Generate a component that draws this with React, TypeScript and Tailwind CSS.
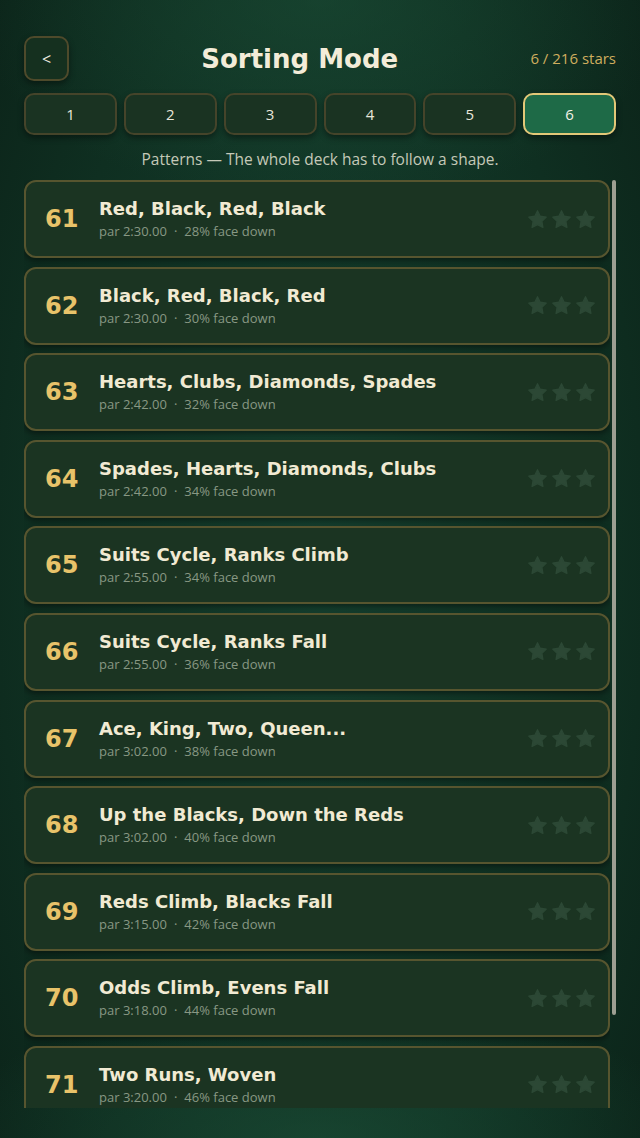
const levels = [
	{ n: 61, name: "Red, Black, Red, Black", par: "2:30.00", down: 28 },
	{ n: 62, name: "Black, Red, Black, Red", par: "2:30.00", down: 30 },
	{ n: 63, name: "Hearts, Clubs, Diamonds, Spades", par: "2:42.00", down: 32 },
	{ n: 64, name: "Spades, Hearts, Diamonds, Clubs", par: "2:42.00", down: 34 },
	{ n: 65, name: "Suits Cycle, Ranks Climb", par: "2:55.00", down: 34 },
	{ n: 66, name: "Suits Cycle, Ranks Fall", par: "2:55.00", down: 36 },
	{ n: 67, name: "Ace, King, Two, Queen...", par: "3:02.00", down: 38 },
	{ n: 68, name: "Up the Blacks, Down the Reds", par: "3:02.00", down: 40 },
	{ n: 69, name: "Reds Climb, Blacks Fall", par: "3:15.00", down: 42 },
	{ n: 70, name: "Odds Climb, Evens Fall", par: "3:18.00", down: 44 },
	{ n: 71, name: "Two Runs, Woven", par: "3:20.00", down: 46 },
];

const Star = () => (
	<svg viewBox="0 0 24 24" className="w-[21px] h-[21px]">
		<polygon
			points="12,2 15.09,8.26 22,9.27 17,14.14 18.18,21.02 12,17.77 5.82,21.02 7,14.14 2,9.27 8.91,8.26"
			fill="#2c4835"
			stroke="#2c4835"
			strokeWidth="1.5"
			strokeLinejoin="round"
		/>
	</svg>
);

const LevelCard = ({ n, name, par, down }: { n: number; name: string; par: string; down: number }) => {
	return (
		<div className="flex items-center shrink-0 h-[78px] rounded-[12px] border-2 border-[#57552f] bg-[#1b3422] pl-[19px] pr-[12px] shadow-[0_3px_6px_rgba(0,0,0,0.45)]">
			<div className="w-[54px] text-[24px] font-bold text-[#e8c36a] font-['DejaVu_Sans',sans-serif] leading-none">{n}</div>
			<div className="flex flex-col flex-1">
				<div className="text-[18px] leading-[22px] font-bold text-[#f1ead3] font-['DejaVu_Sans',sans-serif]">{name}</div>
				<div className="mt-[2px] text-[13px] leading-[18px] text-[#889884] font-['Open_Sans',sans-serif]">
					par {par}
					<span className="mx-[7px]">·</span>
					{down}% face down
				</div>
			</div>
			<div className="flex gap-[3px]">
				<Star />
				<Star />
				<Star />
			</div>
		</div>
	);
};

export default function App() {
	const tabs = [1, 2, 3, 4, 5, 6];
	const active = 6;

	return (
		<div className="w-full h-[1138px] flex flex-col px-6 pt-[36px] pb-[30px] bg-[radial-gradient(ellipse_55%_18%_at_50%_0%,rgba(28,80,56,0.55),transparent),radial-gradient(ellipse_60%_12%_at_50%_100%,rgba(28,80,56,0.6),transparent),radial-gradient(ellipse_75%_90%_at_50%_50%,#164230_0%,#0f2f21_60%,#0a1f16_100%)] font-['Open_Sans',sans-serif]">
			{/* header */}
			<div className="flex items-center h-[45px]">
				<button className="w-[45px] h-[45px] shrink-0 rounded-[10px] border-2 border-[#4e4a2b] bg-[#15301f] text-[#f0ede0] text-[16px] shadow-[0_3px_6px_rgba(0,0,0,0.4)]">
					&lt;
				</button>
				<h1 className="flex-1 text-center text-[26px] font-bold text-[#f3ecd8] font-['DejaVu_Sans',sans-serif] mt-[2px]">Sorting Mode</h1>
				<div className="text-[15px] text-[#cfae5e]">6 / 216 stars</div>
			</div>

			{/* tabs */}
			<div className="mt-[12px] grid grid-cols-6 gap-[7px] h-[42px]">
				{tabs.map((t) => (
					<button
						key={t}
						className={
							t === active
								? "rounded-[10px] border-2 border-[#e2c878] bg-[#1e6a47] text-[#f4f2e8] text-[15px] shadow-[0_3px_6px_rgba(0,0,0,0.4)]"
								: "rounded-[10px] border-2 border-[#45442a] bg-[#1a3322] text-[#e8e6da] text-[15px] shadow-[0_3px_6px_rgba(0,0,0,0.4)]"
						}
					>
						{t}
					</button>
				))}
			</div>

			<p className="mt-[14px] text-center text-[15.5px] leading-5 text-[#c5c9b8]">Patterns — The whole deck has to follow a shape.</p>

			{/* list + scrollbar */}
			<div className="mt-[11px] flex flex-1 min-h-0 gap-[2px]">
				<div className="flex flex-col flex-1 gap-[8.6px] overflow-hidden">
					{levels.map((l) => (
						<LevelCard key={l.n} {...l} />
					))}
				</div>
				<div className="w-[4px] flex flex-col">
					<div className="h-[835px] rounded-full bg-[#9d9f92]" />
				</div>
			</div>
		</div>
	);
}
